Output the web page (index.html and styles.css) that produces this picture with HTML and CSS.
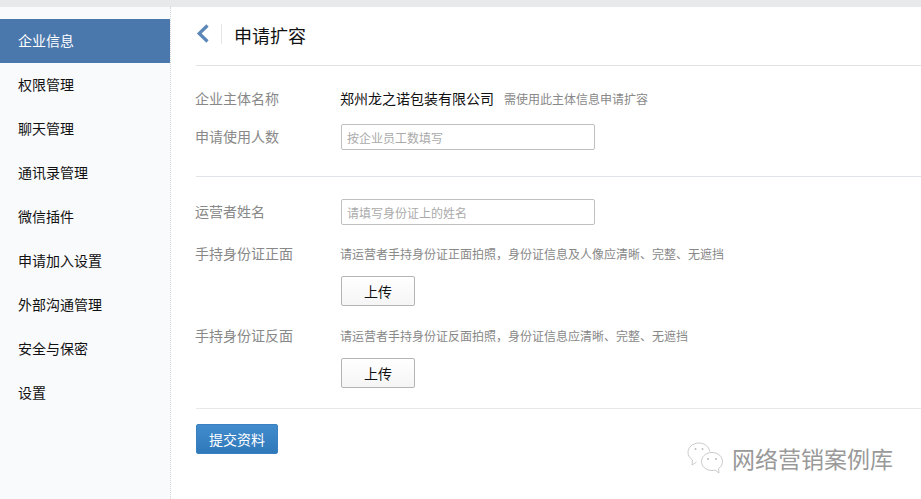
FILE: index.html
```html
<!DOCTYPE html>
<html lang="zh-CN">
<head>
<meta charset="utf-8">
<title>申请扩容</title>
<link rel="stylesheet" href="styles.css">
</head>
<body>
<div class="topbar"></div>
<div class="layout">
  <nav class="sidebar">
    <a class="nav-item active">企业信息</a>
    <a class="nav-item">权限管理</a>
    <a class="nav-item">聊天管理</a>
    <a class="nav-item">通讯录管理</a>
    <a class="nav-item">微信插件</a>
    <a class="nav-item">申请加入设置</a>
    <a class="nav-item">外部沟通管理</a>
    <a class="nav-item">安全与保密</a>
    <a class="nav-item">设置</a>
  </nav>
  <main class="main">
    <header class="head">
      <svg class="back" width="14" height="20" viewBox="0 0 14 20"><path d="M11.500 1.500 L3.200 9.500 L11.500 17.500" fill="none" stroke="#5b87b8" stroke-width="3.200"/></svg>
      <span class="head-sep"></span>
      <h1 class="title">申请扩容</h1>
    </header>
    <section class="group group-first">
      <div class="row row-name">
        <span class="label">企业主体名称</span>
        <span class="company">郑州龙之诺包装有限公司</span>
        <span class="hint">需使用此主体信息申请扩容</span>
      </div>
      <div class="row row-input">
        <span class="label">申请使用人数</span>
        <input class="field" placeholder="按企业员工数填写">
      </div>
    </section>
    <section class="group group-second">
      <div class="row row-input">
        <span class="label">运营者姓名</span>
        <input class="field" placeholder="请填写身份证上的姓名">
      </div>
      <div class="row row-upload">
        <span class="label">手持身份证正面</span>
        <div class="upload">
          <p class="hint">请运营者手持身份证正面拍照，身份证信息及人像应清晰、完整、无遮挡</p>
          <button class="btn">上传</button>
        </div>
      </div>
      <div class="row row-upload">
        <span class="label">手持身份证反面</span>
        <div class="upload">
          <p class="hint">请运营者手持身份证反面拍照，身份证信息应清晰、完整、无遮挡</p>
          <button class="btn">上传</button>
        </div>
      </div>
    </section>
    <div class="actions"><button class="submit">提交资料</button></div>
  </main>
</div>
<div class="watermark">
  <svg width="38" height="34" viewBox="0 0 38 34" fill="none" stroke="#bdbdbd" stroke-width="0.8">
    <path d="M5 24 L5.500 19 C2.500 17 1 14.500 1 11.500 C1 6 6 2 12 2 C17.500 2 22 5.500 22.800 10.500"/>
    <path d="M5 24 L9.500 21"/>
    <path d="M32 32 L31.500 27.500 C34 26 35.500 23.500 35.500 20.500 C35.500 15.500 31 11.500 25 11.500 C19 11.500 14.500 15.500 14.500 20.500 C14.500 25.500 19 29.500 25 29.500 C26 29.500 27 29.300 28 29 Z"/>
    <circle cx="8.500" cy="8" r="1" fill="#bdbdbd" stroke="none"/>
    <circle cx="15.500" cy="8" r="1" fill="#bdbdbd" stroke="none"/>
    <circle cx="21" cy="18" r="1" fill="#bdbdbd" stroke="none"/>
    <circle cx="29" cy="18" r="1" fill="#bdbdbd" stroke="none"/>
  </svg>
  <span class="wm-text">网络营销案例库</span>
</div>
</body>
</html>
```
FILE: styles.css
```css
* { box-sizing: border-box; }
html, body { margin: 0; height: 100%; overflow: hidden; }
body {
  position: relative;
  background: #fff;
  color: #222;
  font-family: "Noto Sans CJK SC", "Liberation Sans", sans-serif;
  font-size: 14px;
}
.topbar { height: 7px; background: #e8e9eb; }
.layout { display: flex; height: 492px; }
.sidebar {
  width: 171px;
  flex: none;
  padding-top: 12px;
  background: #f9fafc;
  border-right: 1px dotted #d3d6db;
}
.nav-item {
  display: block;
  height: 44px;
  line-height: 42px;
  padding-left: 18px;
  color: #111;
}
.nav-item.active { background: #4a77ac; color: #fff; }
.main { flex: 1; min-width: 0; padding-left: 25px; }
.head {
  display: flex;
  align-items: center;
  height: 59px;
  padding-bottom: 5px;
  border-bottom: 1px solid #e2e2e2;
}
.back { flex: none; margin-right: 11px; }
.head-sep { width: 1px; height: 20px; background: #e3e5e8; margin-right: 12px; }
.title { margin: 3px 0 0; font-size: 18px; font-weight: 400; color: #111; }
.group-first { height: 111px; padding-top: 19px; border-bottom: 1px solid #e0e4e8; }
.group-second { height: 232px; padding-top: 22px; border-bottom: 1px solid #e8e8e8; }
.row { display: flex; }
.label { width: 146px; flex: none; margin-left: -1px; color: #888; line-height: 26px; }
.row-name { height: 26px; align-items: center; }
.row-input { height: 26px; align-items: center; }
.row-input .label { padding-bottom: 2px; }
.row-name + .row-input { margin-top: 13px; }
.company { color: #111; margin-left: -1px; }
.row-name .hint { margin: 2px 0 0 10px; }
.hint { margin: 0; font-size: 12px; color: #888; line-height: 20px; }
.field {
  width: 254px;
  height: 26px;
  padding: 0 5px;
  border: 1px solid #c0c0c0;
  border-radius: 2px;
  font: 12px "Noto Sans CJK SC", sans-serif;
  background: #fff;
}
.field::placeholder { color: #aaa; opacity: 1; }
.row-upload { margin-top: 19px; }
.row-upload + .row-upload { margin-top: 20px; }
.row-upload .label { line-height: 18px; }
.upload { display: flex; flex-direction: column; align-items: flex-start; }
.upload .hint { margin-left: -1px; }
.btn {
  width: 74px;
  height: 30px;
  margin-top: 12px;
  border: 1px solid #b4b4b4;
  border-radius: 2px;
  background: linear-gradient(#fff, #f5f5f5);
  color: #111;
  font: 14px "Noto Sans CJK SC", sans-serif;
  padding: 0;
}
.actions { padding-top: 15px; }
.submit {
  width: 82px;
  height: 30px;
  border: 1px solid #3a80c0;
  border-radius: 2px;
  background: linear-gradient(#428bcd, #2f78ba);
  color: #fff;
  font: 14px "Noto Sans CJK SC", sans-serif;
  padding: 0;
}
.watermark {
  position: absolute;
  left: 687px;
  top: 441px;
  display: flex;
  align-items: center;
  gap: 7px;
}
.wm-text { font-size: 23px; color: #999; }
```
